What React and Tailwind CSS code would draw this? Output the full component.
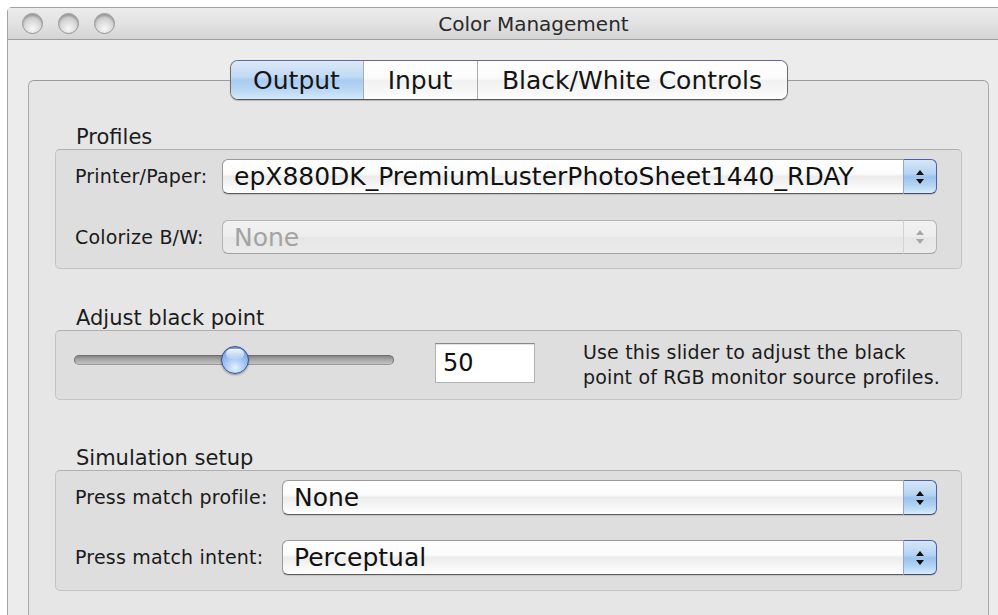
import React from "react";

const sans = "font-['DejaVu_Sans','Liberation_Sans',sans-serif]";

function Arrows({ color }) {
  return (
    <svg width="10" height="16" viewBox="0 0 10 16">
      <polygon points="5,1 9,6 1,6" fill={color} />
      <polygon points="1,10 9,10 5,15" fill={color} />
    </svg>
  );
}

function Popup({ value, disabled }) {
  if (disabled) {
    return (
      <div className="flex h-[34px] flex-1">
        <div className="flex flex-1 items-center rounded-l-[6px] border border-r-0 border-[#b4b4b4] border-b-[#a2a2a2] bg-[linear-gradient(to_bottom,#f1f1f1_0%,#eeeeee_48%,#e6e6e6_52%,#ebebeb_100%)] pl-[11px] text-[25px] leading-none text-[#a3a3a3]">
          {value}
        </div>
        <div className="flex w-[34px] items-center justify-center rounded-r-[6px] border border-[#b4b4b4] border-b-[#a2a2a2] border-l-[#d2d2d2] bg-[linear-gradient(to_bottom,#f1f1f1_0%,#eeeeee_48%,#e6e6e6_52%,#ebebeb_100%)]">
          <Arrows color="#a9a9a9" />
        </div>
      </div>
    );
  }
  return (
    <div className="flex h-[35px] flex-1 rounded-[6px] shadow-[0_1px_1px_rgba(0,0,0,0.12)]">
      <div className="flex flex-1 items-center rounded-l-[6px] border border-r-0 border-[#9a9a9a] border-b-[#5c5c5c] bg-[linear-gradient(to_bottom,#ffffff_0%,#fcfcfc_42%,#ececec_50%,#f3f3f3_68%,#ffffff_100%)] pl-[11px] text-[25px] leading-none text-[#111111]">
        {value}
      </div>
      <div className="flex w-[34px] items-center justify-center rounded-r-[6px] border border-[#4f5fae] border-b-[#4a4a6a] border-l-[#8fa9d0] bg-[linear-gradient(to_bottom,#d6e7f8_0%,#b7d3f1_42%,#9cc2ec_52%,#b4d6f5_78%,#d6ecfc_100%)]">
        <Arrows color="#111111" />
      </div>
    </div>
  );
}

function SectionTitle({ children }) {
  return (
    <div className="pl-[21px] text-[21px] leading-[23px] text-[#1c1c1c]">{children}</div>
  );
}

function Group({ children, className = "" }) {
  return (
    <div
      className={`rounded-[5px] border border-[#c4c4c4] border-t-[#b0b0b0] bg-[#dedede] ${className}`}
    >
      {children}
    </div>
  );
}

function Row({ label, labelWidth, children }) {
  return (
    <div className="flex items-center">
      <div
        className={`${labelWidth} shrink-0 text-[19px] leading-none tracking-[0.2px] text-[#1a1a1a]`}
      >
        {label}
      </div>
      {children}
    </div>
  );
}

function TrafficLight() {
  return (
    <div className="h-[21px] w-[21px] rounded-full border border-[#969696] bg-[radial-gradient(circle_at_50%_78%,#f8f8f8_0%,#dadada_45%,#b0b0b0_100%)] shadow-[inset_0_2px_2px_rgba(0,0,0,0.2)]" />
  );
}

function Segment({ label, width, selected, first }) {
  const base = "flex items-center justify-center text-[25px] leading-none text-[#151515]";
  const bg = selected
    ? "bg-[linear-gradient(to_bottom,#dbe9f8_0%,#c3daf4_40%,#a9cbef_52%,#bcd9f5_80%,#d5eafb_100%)]"
    : "bg-[linear-gradient(to_bottom,#ffffff_0%,#fbfbfb_45%,#f1f1f1_52%,#f7f7f7_80%,#ffffff_100%)]";
  const divider = first ? "" : "border-l border-[#ababab]";
  return <div className={`${base} ${bg} ${divider} ${width}`}>{label}</div>;
}

export default function App() {
  return (
    <div className={`h-[615px] w-[998px] overflow-hidden bg-white pl-[7px] pt-[7px] ${sans}`}>
      <div className="flex h-[608px] w-[1052px] flex-col rounded-tl-[5px] border-l border-t border-[#a3a3a3] bg-[#ececec]">
        {/* title bar */}
        <div className="flex h-[32px] shrink-0 items-center border-b border-[#9e9e9e] bg-[linear-gradient(to_bottom,#ececec_0%,#e2e2e2_50%,#d4d4d4_100%)]">
          <div className="flex w-[110px] items-center gap-[15px] pl-[14px]">
            <TrafficLight />
            <TrafficLight />
            <TrafficLight />
          </div>
          <div className="flex-1 pr-[110px] text-center text-[20px] leading-none text-[#2a2a2a]">
            Color Management
          </div>
        </div>

        {/* content */}
        <div className="flex flex-1 flex-col pl-[20px] pt-[20px]">
          {/* segmented tab control */}
          <div className="relative z-10 flex w-[961px] justify-center">
            <div className="flex h-[40px] overflow-hidden rounded-[8px] border border-[#6e6e6e] border-b-[#555555] border-t-[#6565a0] shadow-[0_1px_1px_rgba(0,0,0,0.2)]">
              <Segment label="Output" width="w-[132px]" selected first />
              <Segment label="Input" width="w-[114px]" />
              <Segment label="Black/White Controls" width="w-[310px]" />
            </div>
          </div>

          {/* tab body */}
          <div className="-mt-[20px] flex w-[961px] flex-1 flex-col rounded-t-[6px] border border-b-0 border-[#a9a9a9] border-t-[#9b9b9b] bg-[#e6e6e6] px-[26px] pt-[45px]">
            <SectionTitle>Profiles</SectionTitle>
            <Group className="pb-[14px] pl-[19px] pr-[24px] pt-[9px]">
              <Row label="Printer/Paper:" labelWidth="w-[147px]">
                <Popup value="epX880DK_PremiumLusterPhotoSheet1440_RDAY" />
              </Row>
              <div className="mt-[26px]">
                <Row label="Colorize B/W:" labelWidth="w-[147px]">
                  <Popup value="None" disabled />
                </Row>
              </div>
            </Group>

            <div className="mt-[38px]">
              <SectionTitle>Adjust black point</SectionTitle>
            </div>
            <Group className="flex h-[70px] items-start pl-[18px]">
              <div className="relative mt-[15px] h-[28px] w-[320px]">
                <div className="mt-[9px] h-[10px] w-full rounded-full border border-[#6f6f6f] border-b-[#9a9a9a] bg-[linear-gradient(to_bottom,#858585_0%,#a6a6a6_45%,#c2c2c2_100%)]" />
                <div className="absolute left-[147px] top-0 h-[28px] w-[28px] rounded-full border border-[#3a4a98] bg-[radial-gradient(circle_at_50%_80%,#e4f2ff_0%,#9ec4ef_45%,#5f8fd8_100%)] shadow-[0_1px_2px_rgba(0,0,0,0.35)]">
                  <div className="mx-auto mt-[2px] h-[10px] w-[18px] rounded-full bg-[linear-gradient(to_bottom,rgba(255,255,255,0.95),rgba(255,255,255,0.15))]" />
                </div>
              </div>
              <div className="ml-[41px] mt-[12px] flex h-[40px] w-[100px] items-center border border-[#b2b2b2] border-t-[#8a8a8a] bg-white pl-[7px] text-[24px] leading-none text-[#111111] shadow-[inset_0_1px_1px_rgba(0,0,0,0.12)]">
                50
              </div>
              <div className="ml-[48px] mt-[9px] text-[19px] leading-[25px] tracking-[0.15px] text-[#1a1a1a]">
                Use this slider to adjust the black
                <br />
                point of RGB monitor source profiles.
              </div>
            </Group>

            <div className="mt-[47px]">
              <SectionTitle>Simulation setup</SectionTitle>
            </div>
            <Group className="pb-[15px] pl-[19px] pr-[24px] pt-[9px]">
              <Row label="Press match profile:" labelWidth="w-[207px]">
                <Popup value="None" />
              </Row>
              <div className="mt-[25px]">
                <Row label="Press match intent:" labelWidth="w-[207px]">
                  <Popup value="Perceptual" />
                </Row>
              </div>
            </Group>
          </div>
        </div>
      </div>
    </div>
  );
}
